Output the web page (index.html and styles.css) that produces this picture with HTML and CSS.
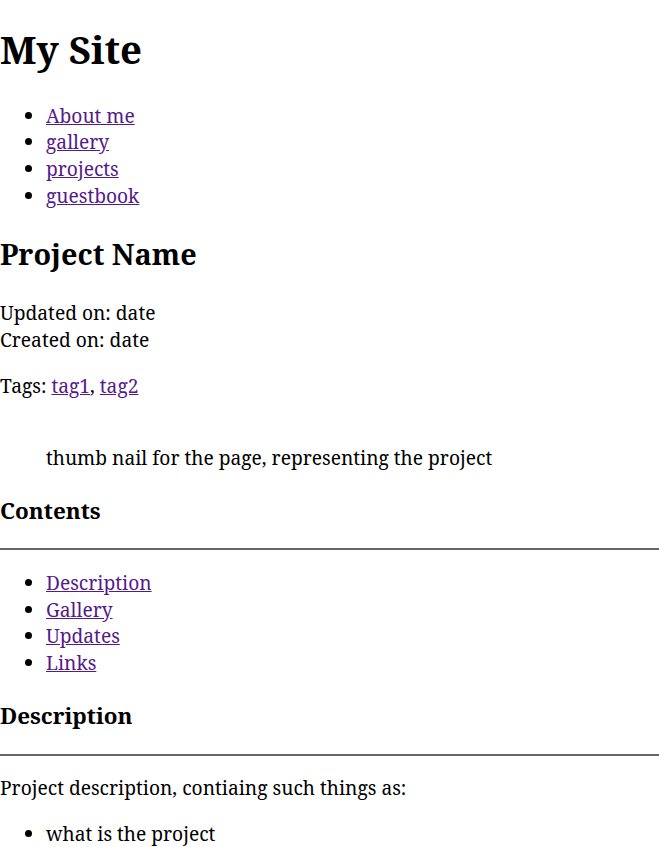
FILE: index.html
```html
<!DOCTYPE html>
<html>
<head>
<meta charset="utf-8">
<title>My Site</title>
<link rel="stylesheet" href="styles.css">
</head>
<body>
<h1>My Site</h1>
<ul class="nav">
<li><a href="#">About me</a></li>
<li><a href="#">gallery</a></li>
<li><a href="#">projects</a></li>
<li><a href="#">guestbook</a></li>
</ul>
<h2>Project Name</h2>
<p>Updated on: date<br>Created on: date</p>
<p>Tags: <a href="#">tag1</a>, <a href="#">tag2</a></p>
<div class="thumb">thumb nail for the page, representing the project</div>
<h3>Contents</h3>
<hr>
<ul>
<li><a href="#">Description</a></li>
<li><a href="#">Gallery</a></li>
<li><a href="#">Updates</a></li>
<li><a href="#">Links</a></li>
</ul>
<h3>Description</h3>
<hr>
<p>Project description, contiaing such things as:</p>
<ul>
<li>what is the project</li>
</ul>
</body>
</html>
```
FILE: styles.css
```css
body {
  margin: 0;
  font-family: "Noto Serif", "DejaVu Serif", serif;
  font-size: 19.2px;
  line-height: 1.4;
  color: #000;
  background: #fff;
}
h1 {
  margin: 0.6em 0 0.67em;
}
h2 {
  margin: 0.83em 0 25.5px;
}
ul {
  padding-left: 46px;
}
a {
  color: #551a8b;
}
.thumb {
  padding: 26.5px 0 0 46px;
}
hr {
  border: 0;
  border-top: 2px solid #666;
  margin: 0;
}
```
